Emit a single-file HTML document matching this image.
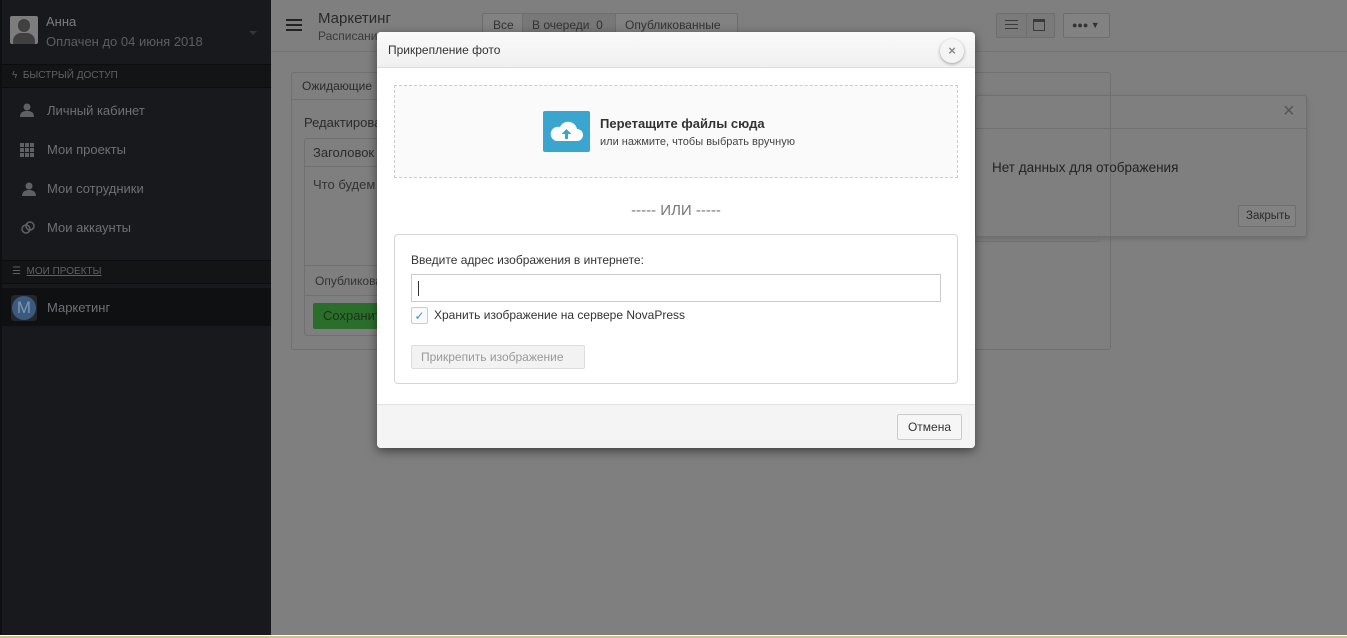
<!DOCTYPE html>
<html><head><meta charset="utf-8">
<style>
*{box-sizing:border-box;margin:0;padding:0}
body{width:1347px;height:638px;overflow:hidden;position:relative;background:#7f7f7f;font-family:"Liberation Sans",sans-serif;font-size:13px;color:#222}
.a{position:absolute}
#sb{left:0;top:0;width:271px;height:635px;background:#18191c;border-left:2px solid #0e0f11}
.sbh{left:0;width:269px;background:#131416;border-top:1px solid #0d0d0f;border-bottom:1px solid #0d0d0f;font-size:10px;color:#5f6166}
.mi{left:18px;color:#6e7075;font-size:13px}
.mi span{position:absolute;left:27px;top:0;white-space:nowrap}
.pn{border:1px solid #707070;border-radius:3px}
.btn{border:1px solid #6e6e6e;border-radius:2px;background:#828282;color:#2a2a2a;font-size:12px}
#modal{left:377px;top:32px;width:598px;height:416px;background:#fff;border-radius:4px;box-shadow:0 3px 10px rgba(0,0,0,.5);overflow:hidden}
</style></head><body>
<div id="sb" class="a">
 <div class="a" style="left:8px;top:16px;width:28px;height:28px;background:#7d7d7d;border-radius:2px;overflow:hidden">
  <div class="a" style="left:8px;top:3px;width:12px;height:13px;background:#404040;border-radius:6px"></div>
  <div class="a" style="left:3px;top:17px;width:22px;height:14px;background:#404040;border-radius:8px 8px 0 0"></div>
 </div>
 <div class="a" style="left:44px;top:14px;color:#7a7c80;font-size:13px">Анна</div>
 <div class="a" style="left:44px;top:34px;color:#5c5e63;font-size:13px">Оплачен до 04 июня 2018</div>
 <div class="a" style="left:247px;top:31px;border:4px solid transparent;border-top:4px solid #34363a"></div>
 <div class="a sbh" style="top:64px;height:24px;padding:5px 0 0 10px">ϟ &nbsp;БЫСТРЫЙ ДОСТУП</div>
 <div class="a mi" style="top:103px"><svg class="a" style="left:0;top:0" width="14" height="14"><circle cx="7" cy="4" r="3.5" fill="#5e6064"/><path d="M0 14c0-5 3-6 7-6s7 1 7 6z" fill="#5e6064"/></svg><span>Личный кабинет</span></div>
 <div class="a mi" style="top:142px"><svg class="a" style="left:0;top:1px" width="14" height="14"><g fill="#5e6064"><rect x="0" y="0" width="4" height="4"/><rect x="5" y="0" width="4" height="4"/><rect x="10" y="0" width="4" height="4"/><rect x="0" y="5" width="4" height="4"/><rect x="5" y="5" width="4" height="4"/><rect x="10" y="5" width="4" height="4"/><rect x="0" y="10" width="4" height="4"/><rect x="5" y="10" width="4" height="4"/><rect x="10" y="10" width="4" height="4"/></g></svg><span>Мои проекты</span></div>
 <div class="a mi" style="top:181px"><svg class="a" style="left:0;top:1px" width="16" height="14"><circle cx="9" cy="4" r="3.5" fill="#5e6064"/><path d="M2 14c0-5 4-6 7-6s7 1 7 6z" fill="#5e6064"/></svg><span>Мои сотрудники</span></div>
 <div class="a mi" style="top:220px"><svg class="a" style="left:0;top:0" width="16" height="16"><circle cx="6" cy="9" r="4" stroke="#5e6064" stroke-width="1.5" fill="none"/><circle cx="10" cy="6" r="4" stroke="#5e6064" stroke-width="1.5" fill="none"/></svg><span>Мои аккаунты</span></div>
 <div class="a sbh" style="top:260px;height:24px;padding:5px 0 0 10px">☰ &nbsp;<u>МОИ ПРОЕКТЫ</u></div>
 <div class="a" style="left:0;top:288px;width:269px;height:38px;background:#0f1012"></div>
 <div class="a" style="left:9px;top:295px;width:26px;height:26px;background:#26272b;border-radius:3px"><div class="a" style="left:1px;top:1px;width:24px;height:24px;border-radius:12px;background:#3a5a80;color:#8198b6;font-size:17px;text-align:center;line-height:24px">M</div></div>
 <div class="a" style="left:45px;top:300px;color:#6e7075">Маркетинг</div>
</div>
<!-- header -->
<div class="a" style="left:271px;top:0;width:1076px;height:52px;border-bottom:1px solid #747474"></div>
<div class="a" style="left:286px;top:19px;width:16px;height:2px;background:#222;box-shadow:0 5px 0 #222,0 10px 0 #222"></div>
<div class="a" style="left:318px;top:10px;font-size:15px;color:#2a2a2a">Маркетинг</div>
<div class="a" style="left:318px;top:29px;font-size:12px;color:#3a3a3a">Расписание</div>
<div class="a btn" style="left:482px;top:13px;width:256px;height:24px;padding:4px 0 0 10px;color:#333">Все<span style="position:absolute;left:39px;top:0;width:94px;height:22px;background:#787878;border-left:1px solid #6e6e6e;border-right:1px solid #6e6e6e;padding:4px 0 0 9px">В очереди&nbsp; 0</span><span style="position:absolute;left:142px;top:4px">Опубликованные</span></div>
<div class="a btn" style="left:996px;top:13px;width:59px;height:25px;background:#7a7a7a"><div class="a" style="left:29px;top:0;width:1px;height:23px;background:#6e6e6e"></div><div class="a" style="left:8px;top:6px;width:13px;height:1px;background:#3a3a3a;box-shadow:0 4px 0 #3a3a3a,0 8px 0 #3a3a3a"></div><div class="a" style="left:36px;top:5px;width:12px;height:12px;border:1px solid #3a3a3a;border-top:3px solid #3a3a3a"></div></div>
<div class="a btn" style="left:1063px;top:13px;width:47px;height:25px;font-size:9px;padding:6px 0 0 8px;color:#333">●●● ▼</div>
<!-- bg panel -->
<div class="a pn" style="left:291px;top:72px;width:820px;height:278px"></div>
<div class="a" style="left:291px;top:99px;width:100px;height:1px;background:#707070"></div>
<div class="a" style="left:302px;top:79px;font-size:12px;color:#2b2b2b">Ожидающие</div>
<div class="a" style="left:304px;top:115px;color:#2b2b2b">Редактирова</div>
<div class="a pn" style="left:304px;top:138px;width:100px;height:198px"></div>
<div class="a" style="left:304px;top:166px;width:80px;height:1px;background:#707070"></div>
<div class="a" style="left:304px;top:265px;width:80px;height:1px;background:#707070"></div>
<div class="a" style="left:304px;top:295px;width:80px;height:1px;background:#707070"></div>
<div class="a" style="left:313px;top:145px;color:#2b2b2b">Заголовок</div>
<div class="a" style="left:313px;top:177px;color:#333">Что будем</div>
<div class="a" style="left:315px;top:274px;font-size:12px;color:#333">Опубликова</div>
<div class="a" style="left:313px;top:303px;width:80px;height:26px;background:#2b6e2b;border-radius:2px;color:#1a331a;padding:5px 0 0 10px">Сохранит</div>
<div class="a pn" style="left:975px;top:95px;width:332px;height:142px;box-shadow:0 2px 6px rgba(0,0,0,.15)"></div>
<div class="a" style="left:975px;top:128px;width:332px;height:1px;background:#707070"></div>
<div class="a" style="left:1283px;top:100px;font-size:20px;color:#555">×</div>
<div class="a" style="left:992px;top:160px;font-size:13.5px;color:#222">Нет данных для отображения</div>
<div class="a btn" style="left:1238px;top:205px;width:58px;height:22px;padding:4px 0 0 7px;font-size:11.5px">Закрыть</div>
<div class="a" style="left:960px;top:235px;width:140px;height:7px;border:1px solid #707070;border-top:0;border-radius:0 0 3px 3px"></div>
<!-- modal -->
<div id="modal" class="a">
 <div class="a" style="left:0;top:0;width:598px;height:36px;background:linear-gradient(#fafafa,#f0f0f0);border-bottom:1px solid #ddd"></div>
 <div class="a" style="left:11px;top:11px;font-size:12px;color:#333">Прикрепление фото</div>
 <div class="a" style="left:563px;top:7px;width:24px;height:24px;border-radius:12px;background:#f4f4f4;box-shadow:0 1px 3px rgba(0,0,0,.35);text-align:center;line-height:23px;font-size:13px;font-weight:bold;color:#888">×</div>
 <div class="a" style="left:17px;top:53px;width:564px;height:93px;border:1px dashed #ccc;background:#fafafa"></div>
 <div class="a" style="left:166px;top:79px;width:47px;height:41px;background:#3aa6d0;border-radius:2px"><svg width="47" height="41"><path d="M13 30h21a6 6 0 0 0 0-12 9 9 0 0 0-17-2 7 7 0 0 0-4 14z" fill="#fff"/><path d="M23.5 18l-5 5h3.5v5h3v-5h3.5z" fill="#3aa6d0"/></svg></div>
 <div class="a" style="left:223px;top:84px;font-size:13px;font-weight:bold;color:#333">Перетащите файлы сюда</div>
 <div class="a" style="left:223px;top:104px;font-size:11px;color:#444">или нажмите, чтобы выбрать вручную</div>
 <div class="a" style="left:0;top:170px;width:598px;text-align:center;font-size:15px;color:#777">----- ИЛИ -----</div>
 <div class="a" style="left:17px;top:202px;width:564px;height:150px;border:1px solid #d6d6d6;border-radius:4px"></div>
 <div class="a" style="left:34px;top:221px;font-size:12px;color:#333">Введите адрес изображения в интернете:</div>
 <div class="a" style="left:34px;top:242px;width:530px;height:28px;border:1px solid #ccc"><div class="a" style="left:6px;top:6px;width:1px;height:15px;background:#333"></div></div>
 <div class="a" style="left:34px;top:275px;width:17px;height:17px;border:1px solid #ccc;border-radius:2px;background:#fafafa;color:#3a8ed0;font-size:12px;text-align:center;line-height:16px">✓</div>
 <div class="a" style="left:57px;top:276px;font-size:12px;color:#333">Хранить изображение на сервере NovaPress</div>
 <div class="a" style="left:34px;top:313px;width:174px;height:24px;border:1px solid #ddd;border-radius:2px;background:#f2f2f2;color:#999;font-size:12px;padding:4px 0 0 9px">Прикрепить изображение</div>
 <div class="a" style="left:0;top:372px;width:598px;height:44px;background:#f4f4f4;border-top:1px solid #e3e3e3"></div>
 <div class="a" style="left:520px;top:382px;width:65px;height:26px;border:1px solid #ccc;border-radius:2px;background:#f6f6f6;color:#333;font-size:12px;text-align:center;line-height:24px">Отмена</div>
</div>
<div class="a" style="left:0;top:635px;width:1347px;height:1px;background:#fff"></div>
<div class="a" style="left:0;top:636px;width:1347px;height:2px;background:#c8c488"></div>
</body></html>
